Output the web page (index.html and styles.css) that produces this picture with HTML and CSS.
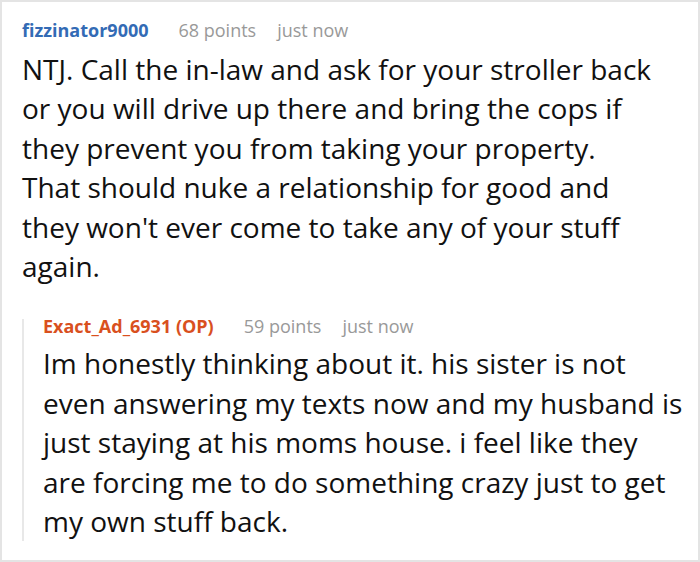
FILE: index.html
```html
<!DOCTYPE html>
<html>
<head>
<meta charset="utf-8">
<link rel="stylesheet" href="styles.css">
</head>
<body>
<div class="frame">
  <div class="comment">
    <div class="meta">
      <span class="user">fizzinator9000</span>
      <span class="points">68 points</span>
      <span class="time">just now</span>
    </div>
    <p class="body">NTJ. Call the in-law and ask for your stroller back<br>or you will drive up there and bring the cops if<br>they prevent you from taking your property.<br>That should nuke a relationship for good and<br>they won't ever come to take any of your stuff<br>again.</p>
    <div class="reply">
      <div class="meta">
        <span class="user op">Exact_Ad_6931 (OP)</span>
        <span class="points">59 points</span>
        <span class="time">just now</span>
      </div>
      <p class="body">Im honestly thinking about it. his sister is not<br>even answering my texts now and my husband is<br>just staying at his moms house. i feel like they<br>are forcing me to do something crazy just to get<br>my own stuff back.</p>
    </div>
  </div>
</div>
</body>
</html>
```

FILE: styles.css
```css
html, body {
  margin: 0;
  padding: 0;
  background: #fff;
}
.frame {
  width: 700px;
  height: 562px;
  box-sizing: border-box;
  border: 2px solid #e4e4e4;
  overflow: hidden;
  font-family: "Open Sans", "Noto Sans", sans-serif;
}
.comment {
  padding: 16px 0 0 20px;
}
.meta {
  display: flex;
  align-items: baseline;
  font-size: 18px;
  line-height: 24px;
  white-space: nowrap;
}
.user {
  font-weight: bold;
  color: #336bb5;
  margin-right: 30px;
}
.user.op {
  color: #d9501e;
}
.points {
  color: #999;
  margin-right: 21px;
}
.time {
  color: #999;
}
.body {
  margin: 8px 0 0 0;
  font-size: 28px;
  line-height: 39.4px;
  color: #111;
  white-space: nowrap;
}
.reply {
  margin-top: 33px;
  border-left: 2px solid #e8e8e8;
  padding-left: 19px;
}
.reply .meta {
  line-height: 14px;
}
.reply .body {
  margin-top: 11px;
}
```
